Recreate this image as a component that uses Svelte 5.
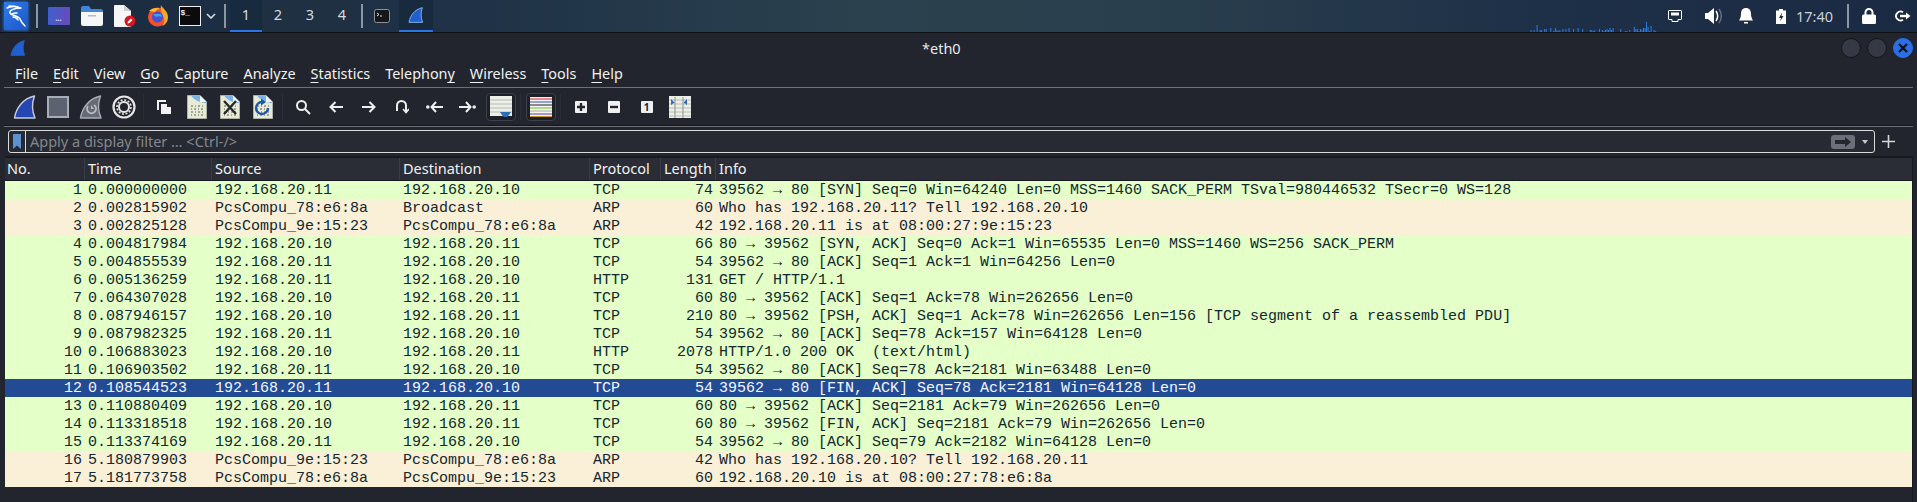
<script lang="ts">
  const menus = [
    ['', 'F', 'ile'], ['', 'E', 'dit'], ['', 'V', 'iew'], ['', 'G', 'o'], ['', 'C', 'apture'],
    ['', 'A', 'nalyze'], ['', 'S', 'tatistics'], ['Telephon', 'y', ''], ['', 'W', 'ireless'],
    ['', 'T', 'ools'], ['', 'H', 'elp']
  ]

  const A = '192.168.20.11'
  const B = '192.168.20.10'
  const M78 = 'PcsCompu_78:e6:8a'
  const M9E = 'PcsCompu_9e:15:23'

  const packets = [
    [1, '0.000000000', A, B, 'TCP', 74, '39562 → 80 [SYN] Seq=0 Win=64240 Len=0 MSS=1460 SACK_PERM TSval=980446532 TSecr=0 WS=128'],
    [2, '0.002815902', M78, 'Broadcast', 'ARP', 60, 'Who has 192.168.20.11? Tell 192.168.20.10'],
    [3, '0.002825128', M9E, M78, 'ARP', 42, '192.168.20.11 is at 08:00:27:9e:15:23'],
    [4, '0.004817984', B, A, 'TCP', 66, '80 → 39562 [SYN, ACK] Seq=0 Ack=1 Win=65535 Len=0 MSS=1460 WS=256 SACK_PERM'],
    [5, '0.004855539', A, B, 'TCP', 54, '39562 → 80 [ACK] Seq=1 Ack=1 Win=64256 Len=0'],
    [6, '0.005136259', A, B, 'HTTP', 131, 'GET / HTTP/1.1'],
    [7, '0.064307028', B, A, 'TCP', 60, '80 → 39562 [ACK] Seq=1 Ack=78 Win=262656 Len=0'],
    [8, '0.087946157', B, A, 'TCP', 210, '80 → 39562 [PSH, ACK] Seq=1 Ack=78 Win=262656 Len=156 [TCP segment of a reassembled PDU]'],
    [9, '0.087982325', A, B, 'TCP', 54, '39562 → 80 [ACK] Seq=78 Ack=157 Win=64128 Len=0'],
    [10, '0.106883023', B, A, 'HTTP', 2078, 'HTTP/1.0 200 OK  (text/html)'],
    [11, '0.106903502', A, B, 'TCP', 54, '39562 → 80 [ACK] Seq=78 Ack=2181 Win=63488 Len=0'],
    [12, '0.108544523', A, B, 'TCP', 54, '39562 → 80 [FIN, ACK] Seq=78 Ack=2181 Win=64128 Len=0'],
    [13, '0.110880409', B, A, 'TCP', 60, '80 → 39562 [ACK] Seq=2181 Ack=79 Win=262656 Len=0'],
    [14, '0.113318518', B, A, 'TCP', 60, '80 → 39562 [FIN, ACK] Seq=2181 Ack=79 Win=262656 Len=0'],
    [15, '0.113374169', A, B, 'TCP', 54, '39562 → 80 [ACK] Seq=79 Ack=2182 Win=64128 Len=0'],
    [16, '5.180879903', M9E, M78, 'ARP', 42, 'Who has 192.168.20.10? Tell 192.168.20.11'],
    [17, '5.181773758', M78, M9E, 'ARP', 60, '192.168.20.10 is at 08:00:27:78:e6:8a']
  ]

  // сетевой график на панели: высоты столбиков, слева направо
  const spark = [
    0,2,0,2,0,7,0,2,2,0,3,3,0,0,4,0,1,4,2,1,2,0,3,0,3,0,4,0,0,3,0,0,4,0,0,3,0,0,0,0,2,2,1,2,
    0,0,3,0,2,1,2,3,2,4,2,4,0,0,0,0,3,0,0,1,1,0,2,0,0,5,3,3,1,3,2,4,4,10,5,1,6,0,2,1
  ]
</script>

{#snippet fin(fill, edge)}
  <path d="M1.5 23C3 13 10 3.5 21.5 1c-2.6 7-2.6 15 .5 22z" fill={fill} stroke={edge} stroke-width="1.4" stroke-linejoin="round"/>
{/snippet}

{#snippet binFile()}
  <path d="M.5 .5H13l6.500 6.500V23.500H.5z" fill="#e7ebd6" stroke="#aeb2a4"/>
  <path d="M4 .5H13l6.500 6.500V8C14 8 8 6 4 .5z" fill="#7ab3e8"/>
  <path d="M13 .5V7h6.500z" fill="#f4f6ee"/>
  <path d="M4 11h2m2 0h1m2 0h2m2 0h1M4 14h1m2 0h2m2 0h1m2 0h2M4 17h2m2 0h1m2 0h2m2 0h1M4 20h1m2 0h2m2 0h1m2 0h2" stroke="#8b8f80" stroke-width="1.600"/>
{/snippet}

<div class="screen">
  <header class="panel">
    <div class="kali">
      <svg width="20" height="22" viewBox="0 0 20 22" fill="none" stroke="#fff" stroke-width="1.500" stroke-linecap="round">
        <path d="M1 3c4-2 9-2 13 0M3 1c3 0 6 0 9 1"/>
        <path d="M15 3C9 3 3 5 4 8c1 3 8 2 10 6 1 3 3 5 5 7"/>
        <path d="M11 8c-2 0-4 0-5 1M7 12c2 0 4 1 5 3"/>
      </svg>
    </div>
    <span class="panel-sep first"></span>
    <div class="launcher desk"><span>...</span></div>
    <div class="launcher">
      <svg width="22" height="20" viewBox="0 0 22 20">
        <path d="M0 2a2 2 0 0 1 2-2h6l2 3h10a2 2 0 0 1 2 2v2H0z" fill="#3f86d9"/>
        <path d="M0 6h22v12a2 2 0 0 1-2 2H2a2 2 0 0 1-2-2z" fill="#f4f6f8"/>
        <rect x="7" y="9" width="8" height="1.500" fill="#b6bcc4"/>
      </svg>
    </div>
    <div class="launcher">
      <svg width="22" height="22" viewBox="0 0 22 22">
        <path d="M0 1a1 1 0 0 1 1-1h9l7 6v15a1 1 0 0 1-1 1H1a1 1 0 0 1-1-1z" fill="#f5f5f5"/>
        <path d="M10 0l7 6h-7z" fill="#cfcfcf"/>
        <circle cx="16" cy="16" r="5.500" fill="#d3161f"/>
        <path d="M13.500 18.500l.5-2 3-3 1.500 1.500-3 3z" fill="#fff"/>
      </svg>
    </div>
    <div class="launcher">
      <svg width="22" height="22" viewBox="0 0 22 22">
        <circle cx="10.500" cy="12" r="9.500" fill="#f0522b"/>
        <path d="M14 0c1 3 7 6 7 12 0 5-3 8-6 9 3-3 3-7 1-10-1-3-3-5-2-11z" fill="#f9a825"/>
        <path d="M2 6c3-3 8-4 11-2-2 0-4 1-5 3z" fill="#fbbd2c"/>
        <circle cx="10.500" cy="12" r="5.500" fill="#4a4fd6"/>
        <path d="M6 9h8l1 3c-2-1-4-1-6 0z" fill="#35a5ee"/>
      </svg>
    </div>
    <div class="launcher term"><span>$_</span></div>
    <svg class="chevron" width="10" height="6" viewBox="0 0 10 6" fill="none" stroke="#d8dde2" stroke-width="1.600"><path d="M1 1l4 4 4-4"/></svg>
    <span class="panel-sep"></span>
    <nav class="workspaces">
      <span class="ws active">1</span>
      <span class="ws">2</span>
      <span class="ws">3</span>
      <span class="ws">4</span>
    </nav>
    <span class="panel-sep"></span>
    <div class="task shell">
      <svg width="16" height="14" viewBox="0 0 16 14">
        <rect x=".5" y=".5" width="15" height="13" rx="2" fill="#14161a" stroke="#8f9398"/>
        <path d="M3 4l2 1.500-2 1.500M6 7h2" stroke="#e0e0e0" fill="none"/>
      </svg>
    </div>
    <div class="task current">
      <svg width="16" height="16" viewBox="0 0 24 24">{@render fin('#1f5fd0', '#8fb6ea')}</svg>
    </div>

    <svg class="spark" width="128" height="11" viewBox="0 0 128 11">
      {#each spark as h, i}
        {#if h}<rect x={i * 1.520} y={11 - h} width="1" height={h} fill="#2a7de8"/>{/if}
      {/each}
    </svg>

    <div class="tray">
      <svg class="t-net" width="14" height="12" viewBox="0 0 14 12">
        <path d="M1 .5h12a.5 .5 0 0 1 .5.5v8a.5 .5 0 0 1-.5.5h-3v2H4v-2H1a.5 .5 0 0 1-.500-.5V1A.5 .5 0 0 1 1 .5z" fill="none" stroke="#fff"/>
        <path d="M3 2.500h8v3H3z" fill="#fff"/>
      </svg>
      <svg class="t-vol" width="18" height="16" viewBox="0 0 18 16">
        <path d="M0 5h3l6-5v16l-6-5H0z" fill="#fff"/>
        <path d="M11 3c2 3 2 7 0 10" fill="none" stroke="#fff" stroke-width="1.500"/>
        <path d="M14 1c3 4 3 10 0 14" fill="none" stroke="#667079" stroke-width="1.500"/>
      </svg>
      <svg class="t-bell" width="14" height="16" viewBox="0 0 14 16">
        <path d="M7 0c3 0 5 2 5 6 0 3 1 5 2 6.500H0C1 11 2 9 2 6c0-4 2-6 5-6z" fill="#fff"/>
        <rect x="5" y="14" width="4" height="1.500" fill="#fff"/>
      </svg>
      <svg class="t-bat" width="10" height="15" viewBox="0 0 10 15">
        <path d="M3 0h4v1.500h3V15H0V1.500h3z" fill="#fff"/>
        <path d="M6 3.500L3 9h2l-1 3.500L7.500 7h-2z" fill="#1d2c3f"/>
      </svg>
      <span class="clock">17:40</span>
      <span class="panel-sep"></span>
      <svg class="t-lock" width="14" height="16" viewBox="0 0 14 16">
        <path d="M3.500 7V4.500a3.500 3.500 0 0 1 7 0V7" fill="none" stroke="#fff" stroke-width="2"/>
        <rect y="6.500" width="14" height="9.500" rx="1.500" fill="#fff"/>
      </svg>
      <svg class="t-out" width="16" height="12" viewBox="0 0 16 12" fill="none" stroke="#fff" stroke-width="1.800">
        <path d="M8 2.200A4.500 4.500 0 1 0 8 9.800"/>
        <path d="M5 6h7" stroke-width="2.400"/>
        <path d="M11 2.500L15.500 6 11 9.500z" fill="#fff" stroke="none"/>
      </svg>
    </div>
  </header>

  <main class="window">
    <div class="titlebar">
      <svg width="16" height="16" viewBox="0 0 24 24">{@render fin('#1f5fd0', '#1f5fd0')}</svg>
      <span class="title">*eth0</span>
      <div class="controls">
        <span class="ctl"></span>
        <span class="ctl"></span>
        <span class="ctl close">
          <svg width="10" height="10" viewBox="0 0 10 10" stroke="#0b1220" stroke-width="2.400"><path d="M1 1l8 8M9 1l-8 8"/></svg>
        </span>
      </div>
    </div>

    <div class="menubar">
      {#each menus as [pre, key, post]}
        <span class="menu">{pre}<u>{key}</u>{post}</span>
      {/each}
    </div>

    <div class="toolbar">
      <div class="tool"><svg width="24" height="24" viewBox="0 0 24 24">{@render fin('#2646b4', '#c9ccd6')}</svg></div>
      <div class="tool"><span class="stop"></span></div>
      <div class="tool">
        <svg width="24" height="24" viewBox="0 0 24 24">
          {@render fin('#666a74', '#a9acb4')}
          <path d="M15 10a4.500 4.500 0 1 1-6 1" fill="none" stroke="#b9bcc3" stroke-width="1.800"/>
          <path d="M12 10v4h3z" fill="#b9bcc3"/>
        </svg>
      </div>
      <div class="tool">
        <svg width="24" height="24" viewBox="0 0 24 24" fill="none">
          <circle cx="12" cy="12" r="10.500" stroke="#e6e6e6" stroke-width="2.200"/>
          <circle cx="12" cy="12" r="5" stroke="#e6e6e6" stroke-width="2"/>
          <circle cx="12" cy="12" r="7" stroke="#e6e6e6" stroke-width="1.600" stroke-dasharray="2 1.660"/>
        </svg>
      </div>
      <span class="tool-sep"></span>
      <div class="tool">
        <svg width="16" height="16" viewBox="0 0 16 16">
          <path d="M1 1h9v2H3v8H1z" fill="#f2f2f2"/>
          <path d="M5 5h6v3h4v7H5z" fill="#f2f2f2"/>
        </svg>
      </div>
      <div class="tool"><svg width="20" height="24" viewBox="0 0 20 24">{@render binFile()}</svg></div>
      <div class="tool">
        <svg width="20" height="24" viewBox="0 0 20 24">
          {@render binFile()}
          <path d="M4 6l12 13M16 6L4 19" stroke="#26282c" stroke-width="2.400"/>
        </svg>
      </div>
      <div class="tool">
        <svg width="20" height="24" viewBox="0 0 20 24">
          {@render binFile()}
          <path d="M9 7a6 6 0 1 0 6 6" fill="none" stroke="#1e56a8" stroke-width="2.400"/>
          <path d="M8 3.500v7l5-3.500z" fill="#1e56a8"/>
        </svg>
      </div>
      <span class="tool-sep"></span>
      <div class="tool">
        <svg width="16" height="16" viewBox="0 0 16 16" fill="none" stroke="#f0f0f0" stroke-width="2"><circle cx="6.500" cy="6.500" r="4.500"/><path d="M10 10l5 5"/></svg>
      </div>
      <div class="tool">
        <svg width="14" height="12" viewBox="0 0 14 12" fill="none" stroke="#f0f0f0" stroke-width="2"><path d="M6.500 1L1.500 6l5 5M2 6h12"/></svg>
      </div>
      <div class="tool">
        <svg width="14" height="12" viewBox="0 0 14 12" fill="none" stroke="#f0f0f0" stroke-width="2"><path d="M7.500 1l5 5-5 5M12 6H0"/></svg>
      </div>
      <div class="tool">
        <svg width="14" height="14" viewBox="0 0 14 14" fill="none" stroke="#f0f0f0" stroke-width="2">
          <path d="M2 11V5.500a4.500 4.500 0 0 1 9 0V11"/>
          <path d="M8 9l3 3.500L14 9" stroke-width="1.600"/>
        </svg>
      </div>
      <div class="tool">
        <svg width="17" height="12" viewBox="0 0 17 12" fill="none" stroke="#f0f0f0" stroke-width="2"><circle cx="1.800" cy="6" r="1.800" fill="#f0f0f0" stroke="none"/><path d="M10 1L5.500 6l4.500 5M6 6h11"/></svg>
      </div>
      <div class="tool">
        <svg width="17" height="12" viewBox="0 0 17 12" fill="none" stroke="#f0f0f0" stroke-width="2"><circle cx="15.200" cy="6" r="1.800" fill="#f0f0f0" stroke="none"/><path d="M7 1l4.500 5L7 11M11 6H0"/></svg>
      </div>
      <div class="tool">
        <span class="toggle">
          <svg width="22" height="22" viewBox="0 0 22 22">
            <rect width="22" height="20" fill="#eceee8"/>
            <path d="M0 4h22M0 8h22M0 12h22M0 16h22" stroke="#b8bab4"/>
            <path d="M10 16h11l-2 3-2 2h-3l-2-2z" fill="#2f6db5"/>
          </svg>
        </span>
      </div>
      <span class="tool-sep"></span>
      <div class="tool">
        <span class="toggle">
          <svg width="22" height="20" viewBox="0 0 22 20">
            <rect width="22" height="20" fill="#f4f4f2"/>
            <path d="M0 2h22" stroke="#e0202a"/><path d="M0 5h22" stroke="#3650c0"/>
            <path d="M0 8h22" stroke="#222"/><path d="M0 11h22" stroke="#6cc51c"/>
            <path d="M0 14h22" stroke="#aaa"/><path d="M0 17h22" stroke="#6b3d92"/>
            <path d="M0 19.500h22" stroke="#c79a1e"/>
          </svg>
        </span>
      </div>
      <span class="tool-sep"></span>
      <div class="tool"><span class="zoom-key">
        <svg width="8" height="8" viewBox="0 0 8 8"><path d="M4 0v8M0 4h8" stroke="#22252e" stroke-width="2.400"/></svg>
      </span></div>
      <div class="tool"><span class="zoom-key">
        <svg width="8" height="8" viewBox="0 0 8 8"><path d="M0 4h8" stroke="#22252e" stroke-width="2.400"/></svg>
      </span></div>
      <div class="tool"><span class="zoom-key one">1</span></div>
      <div class="tool">
        <svg width="22" height="22" viewBox="0 0 22 22">
          <rect width="22" height="22" fill="#eceee8"/>
          <path d="M0 4h22M0 8h22M0 12h22M0 16h22M0 20h22" stroke="#bcbeb8"/>
          <path d="M6 1v21M14 1v21" stroke="#8d8f8c" stroke-width="1"/>
          <path d="M2 3l3.500 3.500L2 9zM18 3l-3.500 3.500L18 9z" fill="#2f6db5"/>
        </svg>
      </div>
    </div>

    <div class="filter-row">
      <div class="filter">
        <span class="bookmark">
          <svg width="8" height="15" viewBox="0 0 8 15"><path d="M0 0h8v15L4 11.500 0 15z" fill="#5d92d0"/></svg>
        </span>
        <span class="placeholder">Apply a display filter … &lt;Ctrl-/&gt;</span>
        <span class="apply">
          <svg width="16" height="10" viewBox="0 0 16 10"><path d="M0 3h10V0l6 5-6 5V7H0z" fill="#25272e"/></svg>
        </span>
        <span class="drop"></span>
      </div>
      <svg class="plus" width="13" height="13" viewBox="0 0 13 13"><path d="M6.500 0v13M0 6.500h13" stroke="#d6d6d6" stroke-width="1.600"/></svg>
    </div>

    <section class="packets">
      <div class="row head">
        <span>No.</span><span>Time</span><span>Source</span><span>Destination</span><span>Protocol</span><span>Length</span><span>Info</span>
      </div>
      {#each packets as [no, time, src, dst, proto, len, info]}
        <div class="row pkt" class:arp={proto === 'ARP'} class:selected={no === 12}>
          <span class="num">{no}</span><span>{time}</span><span>{src}</span><span>{dst}</span><span>{proto}</span><span class="num">{len}</span><span>{info}</span>
        </div>
      {/each}
    </section>
  </main>
</div>

<style>
  :global(body) {
    margin: 0;
    background: #22252e;
  }
  .screen {
    width: 1917px;
    height: 502px;
    overflow: hidden;
    font-family: "Noto Sans", sans-serif;
    background: #22252e;
  }
  .panel {
    height: 32px;
    display: flex;
    align-items: center;
    background: linear-gradient(90deg, #1b2b40 0%, #1f3247 25%, #2b414e 45%, #2a3f4d 60%, #1e3048 80%, #1a2a42 100%);
  }
  .kali {
    width: 24px;
    height: 28px;
    margin-left: 4px;
    display: flex;
    align-items: center;
    justify-content: center;
    background: linear-gradient(135deg, #2f7bea, #1b56c9);
    box-shadow: 0 0 3px #3b86f0;
  }
  .panel-sep {
    width: 2px;
    height: 24px;
    background: #8c97a1;
    flex: none;
  }
  .panel-sep.first {
    margin-left: 8px;
  }
  .launcher {
    width: 33px;
    height: 32px;
    display: flex;
    align-items: center;
    justify-content: center;
    flex: none;
  }
  .launcher.desk {
    margin-left: 4px;
  }
  .desk span {
    width: 22px;
    height: 18px;
    border-radius: 1px;
    background: linear-gradient(100deg, #3f5fd0, #6a4bb8);
    color: #d8def5;
    font: 700 8px/22px "Noto Sans", sans-serif;
    text-align: center;
    overflow: hidden;
  }
  .term {
    margin-left: -1px;
  }
  .term span {
    width: 19px;
    height: 18px;
    padding-left: 1px;
    background: #0b0b0d;
    border: 1px solid #f0f0f0;
    color: #f0f0f0;
    font: 700 8px/11px "Liberation Mono", monospace;
  }
  .chevron {
    margin: 0 8px 0 0;
    flex: none;
  }
  .workspaces {
    display: flex;
    margin: 0 3px 0 4px;
  }
  .ws {
    width: 32px;
    height: 32px;
    box-sizing: border-box;
    text-align: center;
    font-size: 14.500px;
    line-height: 28px;
    color: #d5dbe0;
    background: #1f3042;
  }
  .ws.active {
    background: #182a3e;
    border-bottom: 2px solid #2a74e6;
  }
  .task {
    width: 34px;
    height: 32px;
    box-sizing: border-box;
    display: flex;
    align-items: center;
    justify-content: center;
  }
  .task.shell {
    margin-left: 2px;
  }
  .task.current {
    background: #182a3e;
    border-bottom: 2px solid #2a74e6;
  }
  .spark {
    margin-left: auto;
    align-self: flex-end;
    flex: none;
  }
  .tray {
    display: flex;
    align-items: center;
    height: 32px;
    margin-left: 11px;
    padding-right: 6px;
  }
  .t-vol { margin-left: 23px; }
  .t-bell { margin-left: 16px; }
  .t-bat { margin-left: 23px; }
  .clock {
    margin: 0 14px 0 10px;
    font-size: 14.500px;
    color: #c9d2da;
  }
  .t-lock { margin-left: 13px; }
  .t-out { margin-left: 19px; }

  .window {
    height: 470px;
    box-sizing: border-box;
    border-top: 1px solid #0e1014;
    color: #f2f2f2;
  }
  .titlebar {
    height: 27px;
    box-sizing: border-box;
    padding: 2px 4px 0 10px;
    display: grid;
    grid-template-columns: 912px auto 1fr;
    align-items: center;
  }
  .title {
    font-size: 14.500px;
    color: #e8eaee;
  }
  .controls {
    display: flex;
    justify-content: flex-end;
    gap: 6px;
  }
  .ctl {
    width: 18px;
    height: 18px;
    border-radius: 50%;
    background: #353945;
    border: 1px solid #12141a;
    display: flex;
    align-items: center;
    justify-content: center;
  }
  .ctl.close {
    background: #2a6fe6;
    border-color: #2a6fe6;
  }
  .menubar {
    height: 28px;
    margin: 0 4px;
    padding-left: 11px;
    box-sizing: border-box;
    display: flex;
    align-items: center;
    gap: 15px;
    font-size: 14.400px;
    border-bottom: 1px solid #6e7076;
  }
  .menu u {
    text-underline-offset: 3px;
    text-decoration-thickness: 1px;
  }
  .toolbar {
    height: 38px;
    margin: 0 4px;
    padding-left: 4px;
    box-sizing: border-box;
    display: flex;
    align-items: center;
    border-bottom: 1px solid #14161b;
  }
  .tool {
    width: 33px;
    height: 30px;
    flex: none;
    display: flex;
    align-items: center;
    justify-content: center;
  }
  .tool-sep {
    width: 7px;
    height: 26px;
    flex: none;
    background: linear-gradient(#2c2f38, #2c2f38) center / 1px 100% no-repeat;
  }
  .stop {
    width: 18px;
    height: 18px;
    background: #5d6270;
    border: 2px solid #a9acb5;
  }
  .toggle {
    width: 30px;
    height: 28px;
    box-sizing: border-box;
    border: 1px solid #3c3f49;
    border-radius: 4px;
    background: #1d2027;
    display: flex;
    align-items: center;
    justify-content: center;
    flex: none;
  }
  .zoom-key {
    width: 12px;
    height: 12px;
    border-radius: 1px;
    background: #f0f0f0;
    display: flex;
    align-items: center;
    justify-content: center;
  }
  .zoom-key.one {
    color: #22252e;
    font: 700 10px/12px "Noto Sans", sans-serif;
  }
  .filter-row {
    display: flex;
    align-items: flex-start;
    height: 30px;
    margin: 0 4px;
    padding: 3px 0 0 4px;
    border-top: 1px solid #6e7076;
    box-sizing: border-box;
  }
  .filter {
    width: 1867px;
    height: 23px;
    flex: none;
    box-sizing: border-box;
    border: 1px solid #dadada;
    border-radius: 3px;
    display: flex;
    align-items: center;
    background: #272a33;
  }
  .bookmark {
    width: 17px;
    height: 21px;
    box-sizing: border-box;
    border-right: 1px solid #dadada;
    display: flex;
    align-items: center;
    justify-content: center;
    flex: none;
  }
  .placeholder {
    margin: 0 0 2px 4px;
    font-size: 14.500px;
    color: #85878e;
  }
  .apply {
    margin-left: auto;
    width: 24px;
    height: 14px;
    border-radius: 3px;
    background: #6c6f79;
    display: flex;
    align-items: center;
    justify-content: center;
  }
  .drop {
    width: 0;
    height: 0;
    margin: 0 6px 0 7px;
    border: 3px solid transparent;
    border-top: 4px solid #c8c8c8;
    border-bottom: 0;
  }
  .plus {
    margin: 5px 0 0 7px;
    flex: none;
  }
  .packets {
    height: 346px;
    box-sizing: border-box;
    margin: 0 4px 0 5px;
    border-top: 2px solid #17191e;
    border-right: 1px solid #17191e;
  }
  .row {
    display: grid;
    grid-template-columns: 79px 127px 188px 190px 71px 55px 1fr;
  }
  .head {
    height: 23px;
    background: #2a2d36;
    color: #f2f2f2;
    font-size: 14.500px;
    line-height: 20px;
    border-bottom: 1px solid #17191e;
    box-sizing: border-box;
  }
  .head span {
    padding-left: 3px;
    border-left: 1px solid #3a3d47;
    white-space: nowrap;
    overflow: hidden;
  }
  .head span:first-child {
    border-left: 0;
    padding-left: 2px;
  }
  .pkt {
    height: 18px;
    background: #e4ffc7;
    color: #12272e;
    font: 15px/20px "Liberation Mono", monospace;
    white-space: pre;
  }
  .pkt.arp {
    background: #faf0d7;
  }
  .pkt.selected {
    background: #234b93;
    color: #f4f7ff;
  }
  .pkt span {
    padding-left: 4px;
  }
  .pkt .num {
    padding: 0 2px 0 0;
    text-align: right;
  }
</style>
